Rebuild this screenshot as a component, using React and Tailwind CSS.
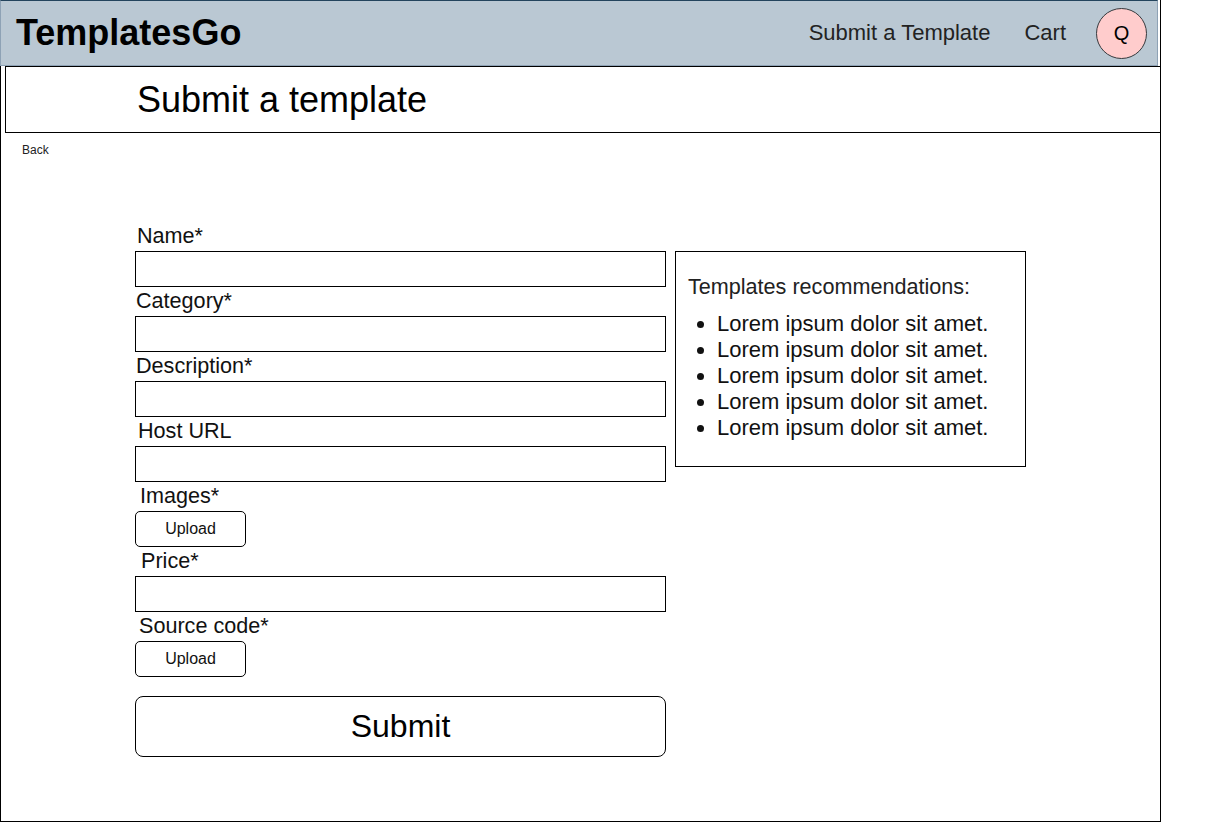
import React from "react";

const Field = ({ label, offset }) => (
  <div className="flex flex-col">
    <div className={`h-[29px] pb-[2px] flex items-center text-[21.6px] leading-[27px] text-[#111] ${offset}`}>{label}</div>
    <div className="h-[36px] w-[531px] border border-black bg-white" />
  </div>
);

const Upload = ({ label, offset }) => (
  <div className="flex flex-col">
    <div className={`h-[29px] pb-[2px] flex items-center text-[21.6px] leading-[27px] text-[#111] ${offset}`}>{label}</div>
    <button className="h-[36px] w-[111px] border border-black rounded-[5px] bg-white text-[16px] text-[#111] flex items-center justify-center">
      Upload
    </button>
  </div>
);

export default function App() {
  return (
    <div className="w-[1228px] h-[822px] bg-white font-['Liberation_Sans',Arial,sans-serif] text-black">
      <div className="w-[1161px] h-[822px] border-l border-r border-b border-black flex flex-col">
        <header className="-ml-px w-[1158px] h-[66px] shrink-0 bg-[#bac8d3] border border-[#8ea2b5] border-t-[#23445d] flex items-center">
          <div className="pl-[15px] text-[36px] font-bold leading-none text-black">TemplatesGo</div>
          <div className="ml-auto flex items-center text-[22px] text-[#222]">
            <span className="mb-[2px]">Submit a Template</span>
            <span className="ml-[34px] mb-[2px]">Cart</span>
            <div className="ml-[30px] mr-[10px] w-[51px] h-[51px] rounded-full bg-[#ffcccc] border border-[#36393d] flex items-center justify-center text-[20px] text-black">
              Q
            </div>
          </div>
        </header>
        <div className="ml-[4px] h-[67px] shrink-0 border border-r-0 border-black flex items-center pl-[131px] text-[36px] text-black">
          Submit a template
        </div>
        <div className="pl-[21px] mt-[11px] text-[12px] leading-[13px] text-[#222]">Back</div>
        <div className="mt-[65px] pl-[134px] flex items-start">
          <div className="flex flex-col w-[531px]">
            <Field label="Name*" offset="pl-[2px]" />
            <Field label="Category*" offset="pl-[1px]" />
            <Field label="Description*" offset="pl-[1px]" />
            <Field label="Host URL" offset="pl-[3px]" />
            <Upload label="Images*" offset="pl-[5px]" />
            <Field label="Price*" offset="pl-[6px]" />
            <Upload label="Source code*" offset="pl-[4px]" />
            <button className="mt-[19px] pb-[2px] h-[61px] w-[531px] border border-black rounded-[8px] bg-white text-[32px] text-black flex items-center justify-center">
              Submit
            </button>
          </div>
          <div className="ml-[9px] mt-[29px] w-[351px] h-[216px] border border-black pl-[12px] pt-[22px]">
            <div className="text-[21.6px] leading-[26px] text-[#222]">Templates recommendations:</div>
            <ul className="mt-[11px] list-disc pl-[29px] text-[22px] leading-[26px] text-[#111]">
              <li>Lorem ipsum dolor sit amet.</li>
              <li>Lorem ipsum dolor sit amet.</li>
              <li>Lorem ipsum dolor sit amet.</li>
              <li>Lorem ipsum dolor sit amet.</li>
              <li>Lorem ipsum dolor sit amet.</li>
            </ul>
          </div>
        </div>
      </div>
    </div>
  );
}
